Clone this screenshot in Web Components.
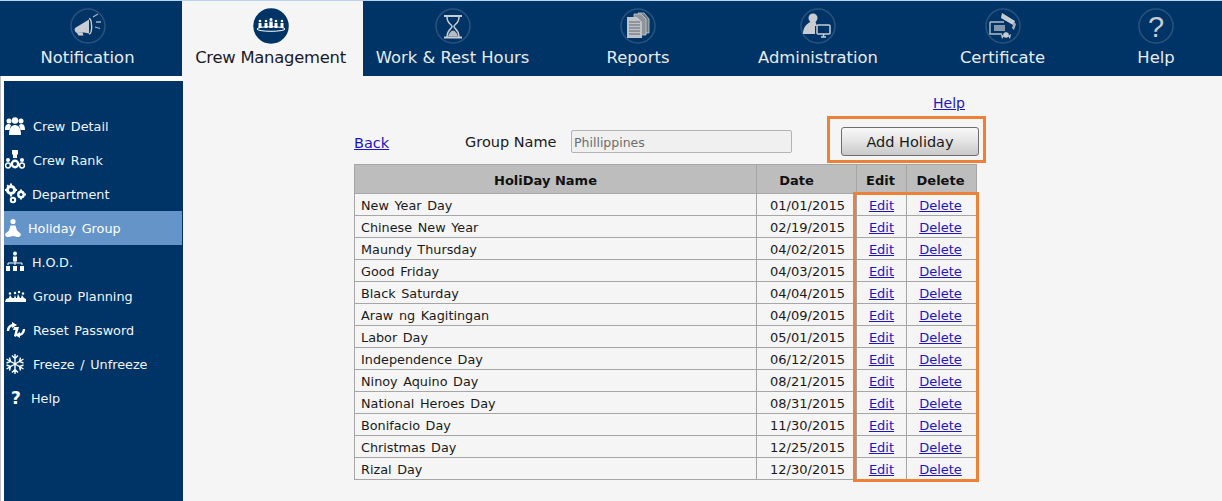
<!DOCTYPE html>
<html>
<head>
<meta charset="utf-8">
<title>Holiday Group</title>
<style>
html, body { margin: 0; height: 100%; background: #f5f5f5; overflow: hidden; }
body { font-family: "DejaVu Sans", Verdana, sans-serif; }
</style>
</head>
<body>
<app-shell>
  <top-nav slot="nav">
    <nav-tab label="Notification" icon="megaphone" shift="7" style="width:182px"></nav-tab>
    <nav-tab label="Crew Management" icon="crew" shift="4" active style="width:181px"></nav-tab>
    <nav-tab label="Work &amp; Rest Hours" icon="hourglass" shift="1" style="width:180px"></nav-tab>
    <nav-tab label="Reports" icon="reports" style="width:190px"></nav-tab>
    <nav-tab label="Administration" icon="admin" style="width:170px"></nav-tab>
    <nav-tab label="Certificate" icon="certificate" style="width:199px"></nav-tab>
    <nav-tab label="Help" icon="help" style="width:108px"></nav-tab>
  </top-nav>
  <side-menu slot="side">
    <side-item icon="people" gap="33">Crew Detail</side-item>
    <side-item icon="medal" gap="33">Crew Rank</side-item>
    <side-item icon="gears" gap="32">Department</side-item>
    <side-item icon="yoga" gap="28" active>Holiday Group</side-item>
    <side-item icon="tree" gap="32">H.O.D.</side-item>
    <side-item icon="group" gap="33">Group Planning</side-item>
    <side-item icon="reset" gap="33">Reset Password</side-item>
    <side-item icon="snow" gap="33">Freeze / Unfreeze</side-item>
    <side-item icon="q" gap="31">Help</side-item>
  </side-menu>
  <holiday-panel slot="main"></holiday-panel>
</app-shell>

<script>
const NAV_ICONS = {
  megaphone: `<path d="M5 20l14-8.500v14l-5-1-7 .500c-2-.500-3-3-2-5z" fill="#c9cdd2"/><path d="M19 10.500c3 0 4 15.500 0 15.500" fill="none" stroke="#c9cdd2" stroke-width="1.400"/><path d="M7 25l1.500 2.500h5l-1-3z" fill="#c9cdd2"/><path d="M23 9l5-3M26 14h5M25 19l5 1.500" stroke="#aab1b9" stroke-width="1.300" fill="none"/>`,
  crew: `<g fill="#fff"><circle cx="7" cy="13" r="1.300"/><path d="M5.500 15h3v5h-3z"/><circle cx="13" cy="13" r="1.300"/><path d="M11.500 15h3v5h-3z"/><circle cx="18" cy="11.500" r="1.500"/><path d="M16.300 13.500h3.400v6.500h-3.400z"/><circle cx="23" cy="13" r="1.300"/><path d="M21.500 15h3v5h-3z"/><circle cx="29" cy="13" r="1.300"/><path d="M27.500 15h3v5h-3z"/></g><ellipse cx="18" cy="21" rx="14" ry="2.300" fill="none" stroke="#fff" stroke-width="1"/>`,
  hourglass: `<path d="M9 8h18M9 29.500h18" stroke="#c9cdd2" stroke-width="1.800"/><path d="M12 9c0 7 5 7 5 9.500s-5 3-5 10.500M24 9c0 7-5 7-5 9.500s5 3 5 10.500" fill="none" stroke="#c9cdd2" stroke-width="1.500"/><path d="M13 28.500c.500-3 3.500-6 5-6s4.500 3 5 6z" fill="#b6bcc3"/>`,
  reports: `<path d="M18 5h6l5 6v14h-3z" fill="#6f7b88" stroke="#c9cdd2" stroke-width=".8"/><path d="M14 6h7l5 5v16H14z" fill="#8d949c" stroke="#c9cdd2" stroke-width=".8"/><path d="M7 9h10l5 5v16H7z" fill="#bfc2c6"/><path d="M9 14h11M9 17h11M9 20h11M9 23h11M9 26h11" stroke="#5f666e" stroke-width="1"/>`,
  admin: `<circle cx="13" cy="10" r="4.500" fill="#c9cdd2"/><path d="M10.500 14h5l1.500 4h-2v8H3c0-6 3-10 7.500-12z" fill="#c9cdd2"/><rect x="17" y="17" width="13" height="9" rx="1" fill="none" stroke="#c9cdd2" stroke-width="1.500"/><path d="M21 29h5M23.500 26v3" stroke="#c9cdd2" stroke-width="1.500"/>`,
  certificate: `<path d="M5 14h14M5 14v12h12" fill="none" stroke="#b4bbc2" stroke-width="1.400"/><rect x="9" y="17" width="11" height="6" fill="#8097ae"/><path d="M17 5l13 8-2 4-12-7z" fill="#c9cdd2"/><path d="M29 14l2 2-2 6-2-2z" fill="#aab1b9"/><circle cx="21" cy="27" r="2.800" fill="#c9cdd2"/><path d="M16 26l3 2-2 3zM26 26l-3 2 2 3z" fill="#c9cdd2"/>`,
  help: `<text x="18" y="29" text-anchor="middle" font-family="Liberation Sans, sans-serif" font-size="29" fill="#c9cdd2">?</text>`
};

const SIDE_ICONS = {
  people: `<circle cx="4" cy="6" r="2.500"/><circle cx="16" cy="6" r="2.500"/><circle cx="10" cy="5.500" r="3.200"/><path d="M0 15c0-4 1-6 4-6l2 1-1.500 5zM20 15c0-4-1-6-4-6l-2 1 1.500 5z"/><path d="M4 20c0-6 2-10 6-10s6 4 6 10z"/>`,
  medal: `<path d="M7 1h6v4l-1 1v3H8V6L7 5z"/><circle cx="10" cy="15" r="3.200" fill="none" stroke="#fff" stroke-width="2.400"/><circle cx="3" cy="11" r="2"/><circle cx="17" cy="11" r="2"/><circle cx="3" cy="16.500" r="2.400" fill="none" stroke="#fff" stroke-width="1.500"/><circle cx="17" cy="16.500" r="2.400" fill="none" stroke="#fff" stroke-width="1.500"/>`,
  gears: `<circle cx="6" cy="7" r="3.600" fill="none" stroke="#fff" stroke-width="3"/><circle cx="16" cy="11.500" r="2.700" fill="none" stroke="#fff" stroke-width="2.400"/><circle cx="8" cy="17" r="2.200" fill="none" stroke="#fff" stroke-width="2"/><path d="M5 .500h2v2H5zM0 6h2v2H0zM10 6h2v2h-2zM5 11.500h2v2H5zM1.500 2.500l1.500-1 1 1.500-1.500 1zM15 6.500h2V8h-2zM19.500 10.500h1.500v2h-1.500zM15 15h2v1.500h-2z"/>`,
  yoga: `<circle cx="8" cy="4.500" r="2.600"/><path d="M5.500 8.500h5l1.500 5 3.500 3c1 2-.500 3.500-3 3.500L8 19l-4.500 1c-2.500 0-4-1.500-3-3.500l3.500-3z"/>`,
  tree: `<circle cx="10" cy="2.500" r="2"/><path d="M8 5.500h4v5H8z"/><path d="M3 14v-2h14v2M10 10v4" fill="none" stroke="#fff" stroke-width="1"/><path d="M1 15h4v5H1zM8 15h4v5H8zM15 15h4v5h-4z"/>`,
  group: `<path d="M0 17l1-3 3-1 1-3 2 3h2l1-3 1 3h1l1-4 2 4h1l1-3 2 3 2 1v3z"/><circle cx="5" cy="8.500" r="1.200"/><circle cx="10" cy="8" r="1.200"/><circle cx="14" cy="7" r="1.200"/><circle cx="18" cy="8.500" r="1.200"/>`,
  reset: `<path d="M3 12c0-4 3-6 6-6" fill="none" stroke="#fff" stroke-width="2.400"/><path d="M7 3l5 3-5 3z"/><path d="M19 10c0 4-3 6-6 6" fill="none" stroke="#fff" stroke-width="2.400"/><path d="M15 19l-5-3 5-3z"/><path d="M9 8h5l-3 10-2-1 1.500-6H8z"/>`,
  snow: `<path d="M10 1v20M1.500 6l17 10M18.500 6l-17 10M7 2.500l3 3 3-3M7 19.500l3-3 3 3M1.500 10l4-1.500-1-4M18.500 10l-4-1.500 1-4M1.500 12l4 1.500-1 4M18.500 12l-4 1.500 1 4" fill="none" stroke="#fff" stroke-width="1.400"/>`,
  q: `<text x="11" y="17" text-anchor="middle" font-family="DejaVu Sans, sans-serif" font-weight="700" font-size="17" fill="#fff">?</text>`
};

class AppShell extends HTMLElement {
  connectedCallback() {
    this.attachShadow({mode: 'open'});
    this.shadowRoot.innerHTML = `
      <style>
:host {
  display: grid;
  grid-template-rows: 76px 1fr;
  grid-template-columns: 183px 1fr;
  grid-template-areas: "nav nav" "side main";
  height: 501px;
  width: 1222px;
  overflow: hidden;
}
.nav { grid-area: nav; }
.side { grid-area: side; background: #fff; border-left: 1px solid #bcbcbc; padding: 5px 0 0 3px; display: flex; min-height: 0; }
.main { grid-area: main; min-width: 0; }
      </style>
      <div class="nav"><slot name="nav"></slot></div>
      <div class="side"><slot name="side"></slot></div>
      <div class="main"><slot name="main"></slot></div>
    `;
  }
}

class TopNav extends HTMLElement {
  connectedCallback() {
    this.attachShadow({mode: 'open'});
    this.shadowRoot.innerHTML = `
      <style>
:host { display: flex; height: 75px; background: #003466; border-top: 1px solid #b9d2ee; }
      </style>
      <slot></slot>
    `;
  }
}

class NavTab extends HTMLElement {
  connectedCallback() {
    const icon = NAV_ICONS[this.getAttribute('icon')];
    const label = this.getAttribute('label');
    const shift = this.getAttribute('shift') || 0;
    this.attachShadow({mode: 'open'});
    this.shadowRoot.innerHTML = `
      <style>
:host {
  display: flex;
  flex-direction: column;
  align-items: center;
  color: #e6ebf0;
  font-size: 16.400px;
  box-sizing: border-box;
  padding: 7px ${shift}px 0 0;
  white-space: nowrap;
}
:host([active]) { background: #f5f5f5; color: #1a1a2a; letter-spacing: -0.25px; }
svg { width: 36px; height: 36px; display: block; }
.ring { fill: none; stroke: #2a527c; stroke-width: 1.500; }
:host([active]) .ring { fill: #003466; stroke: #003466; }
span { margin-top: 4px; line-height: 20px; }
      </style>
      <svg viewBox="0 0 36 36"><circle class="ring" cx="18" cy="18" r="17"/>${icon}</svg>
      <span>${label}</span>
    `;
  }
}

class SideMenu extends HTMLElement {
  connectedCallback() {
    this.attachShadow({mode: 'open'});
    this.shadowRoot.innerHTML = `
      <style>
:host { display: block; flex: 1; background: #003466; padding-top: 28px; box-sizing: border-box; }
      </style>
      <slot></slot>
    `;
  }
}

class SideItem extends HTMLElement {
  connectedCallback() {
    const icon = SIDE_ICONS[this.getAttribute('icon')];
    const gap = Number(this.getAttribute('gap')) - 4;
    this.attachShadow({mode: 'open'});
    this.shadowRoot.innerHTML = `
      <style>
:host {
  display: grid;
  grid-template-columns: ${gap}px 1fr;
  align-items: center;
  height: 34px;
  color: #f2f5f8;
  font-size: 12.800px;
  word-spacing: 1.500px;
  margin-right: 1px;
  white-space: nowrap;
}
:host([active]) { background: #6595c8; color: #fff; }
svg { width: 22px; height: 22px; display: block; fill: #fff; margin-left: 1px; }
      </style>
      <svg viewBox="0 0 22 22">${icon}</svg>
      <span><slot></slot></span>
    `;
  }
}

const HOLIDAYS = [
  ['New Year Day', '01/01/2015'],
  ['Chinese New Year', '02/19/2015'],
  ['Maundy Thursday', '04/02/2015'],
  ['Good Friday', '04/03/2015'],
  ['Black Saturday', '04/04/2015'],
  ['Araw ng Kagitingan', '04/09/2015'],
  ['Labor Day', '05/01/2015'],
  ['Independence Day', '06/12/2015'],
  ['Ninoy Aquino Day', '08/21/2015'],
  ['National Heroes Day', '08/31/2015'],
  ['Bonifacio Day', '11/30/2015'],
  ['Christmas Day', '12/25/2015'],
  ['Rizal Day', '12/30/2015']
];

class HolidayPanel extends HTMLElement {
  connectedCallback() {
    const rows = HOLIDAYS.map(h => `
      <tr><td class="name">${h[0]}</td><td class="date">${h[1]}</td>
      <td class="c"><a href="#">Edit</a></td><td class="c del"><a href="#">Delete</a></td></tr>`).join('');
    this.attachShadow({mode: 'open'});
    this.shadowRoot.innerHTML = `
      <style>
:host {
  display: block;
  position: relative;
  height: 425px;
  padding: 19px 0 0 171px;
  box-sizing: border-box;
  font-size: 13px;
  color: #1a1a1a;
}
a { color: #1c14c6; text-decoration: underline; }
.help { width: 611px; text-align: right; line-height: 16px; font-size: 14px; }
.bar { display: flex; align-items: center; height: 37px; width: 625px; margin-top: 12px; }
.back { font-size: 14.500px; width: 111px; padding-top: 2px; }
.gname { font-size: 14.500px; width: 106px; }
input {
  width: 221px; height: 23px; box-sizing: border-box; margin: 0;
  padding: 2px 3px 0 2px; font: 12.500px "DejaVu Sans", sans-serif; color: #6d6d6d;
  background: #f0f0f0; border: 1px solid #b4b4b4; border-radius: 2px;
}
button {
  margin-left: 49px; width: 138px; height: 29px; padding: 0;
  font: 14.500px "DejaVu Sans", sans-serif; color: #1a1a1a;
  background: linear-gradient(#f8f8f8, #e6e6e6 45%, #c8c8c8);
  border: 1px solid #6f6f6f; border-radius: 3px;
}
table { border-collapse: collapse; table-layout: fixed; width: 622px; margin-top: 4px; }
th, td { border: 1px solid #a6a6a6; padding: 0; height: 22px; white-space: nowrap; box-sizing: border-box; }
th { background: #bdbdbd; height: 29px; font-weight: 700; color: #111; padding: 2px 2px 0 0; }
th.off { padding-right: 20px; }
td { padding-top: 1px; }
td.name { padding-left: 6px; font-size: 12.800px; word-spacing: 1.500px; }
td.date { padding-right: 11px; text-align: right; }
td.c { text-align: center; }
td.del { padding-right: 2px; }
.mark { position: absolute; border: 3px solid #ed8137; box-sizing: border-box; pointer-events: none; }
.mark.add { left: 644px; top: 40px; width: 159px; height: 47px; }
.mark.col { left: 670px; top: 116px; width: 126px; height: 290px; }
      </style>
      <div class="help"><a href="#">Help</a></div>
      <div class="bar">
        <a class="back" href="#">Back</a>
        <span class="gname">Group Name</span>
        <input value="Phillippines" disabled>
        <button>Add Holiday</button>
      </div>
      <table>
        <colgroup><col style="width:402px"><col style="width:100px"><col style="width:50px"><col style="width:70px"></colgroup>
        <tr><th class="off">HoliDay Name</th><th class="off">Date</th><th>Edit</th><th>Delete</th></tr>
        ${rows}
      </table>
      <div class="mark add"></div>
      <div class="mark col"></div>
    `;
  }
}

customElements.define('app-shell', AppShell);
customElements.define('top-nav', TopNav);
customElements.define('nav-tab', NavTab);
customElements.define('side-menu', SideMenu);
customElements.define('side-item', SideItem);
customElements.define('holiday-panel', HolidayPanel);
</script>
</body>
</html>
